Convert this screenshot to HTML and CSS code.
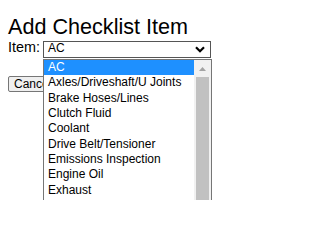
FILE: index.html
```html
<!DOCTYPE html>
<html lang="en">
<head>
<meta charset="utf-8">
<title>Add Checklist Item</title>
<link rel="stylesheet" href="styles.css">
</head>
<body>
<div class="page">
  <h1 class="title">Add Checklist Item</h1>
  <div class="field-row">
    <label class="field-label">Item:</label>
    <div class="combo">
      <div class="select">
        <span class="select-value">AC</span>
        <svg class="chevron" width="10" height="7" viewBox="0 0 10 7"><path d="M1 1.2 L5 5.2 L9 1.2" fill="none" stroke="#000" stroke-width="2.2"/></svg>
      </div>
      <div class="listbox">
        <ul class="options">
          <li class="option selected">AC</li>
          <li class="option">Axles/Driveshaft/U Joints</li>
          <li class="option">Brake Hoses/Lines</li>
          <li class="option">Clutch Fluid</li>
          <li class="option">Coolant</li>
          <li class="option">Drive Belt/Tensioner</li>
          <li class="option">Emissions Inspection</li>
          <li class="option">Engine Oil</li>
          <li class="option">Exhaust</li>
        </ul>
        <div class="scrollbar">
          <div class="scroll-btn">
            <svg width="7" height="4" viewBox="0 0 7 4"><path d="M0 4 L3.5 0 L7 4 Z" fill="#a3a3a3"/></svg>
          </div>
          <div class="thumb"></div>
        </div>
      </div>
    </div>
  </div>
  <div class="actions">
    <button class="btn" type="button">Cancel</button>
  </div>
</div>
</body>
</html>
```
FILE: styles.css
```css
html,
body {
  margin: 0;
  height: 200px;
  overflow: hidden;
}
body {
  background: #fff;
  color: #000;
  font-family: "Liberation Sans", Arial, sans-serif;
}
.page {
  box-sizing: border-box;
  height: 200px;
  padding: 14px 8px 0;
}
.title {
  margin: 0;
  font-size: 21.6px;
  line-height: 25px;
  font-weight: normal;
}
.field-row {
  display: flex;
  align-items: baseline;
  gap: 3px;
}
.field-label {
  font-size: 14.4px;
}
.combo {
  position: relative;
}
.select {
  box-sizing: border-box;
  width: 168px;
  height: 17px;
  border: 1px solid #555;
  padding: 0 5px 0 4px;
  font-size: 12px;
  line-height: 13px;
  display: flex;
  align-items: flex-start;
  justify-content: space-between;
}
.chevron {
  margin-top: 4px;
}
.listbox {
  position: absolute;
  top: 100%;
  left: 0;
  box-sizing: border-box;
  width: 169px;
  height: 141px;
  border: 1px solid #767676;
  border-bottom: 0;
  background: #fff;
  display: flex;
  overflow: hidden;
  margin-top: 1px;
}
.options {
  list-style: none;
  margin: 0;
  padding: 0;
  flex: 1;
  font-size: 12px;
}
.option {
  height: 15.35px;
  line-height: 15.35px;
  padding-left: 4px;
  white-space: nowrap;
}
.option.selected {
  background: #1e90ff;
  color: #fff;
}
.scrollbar {
  width: 17px;
  background: #f1f1f1;
  display: flex;
  flex-direction: column;
}
.scroll-btn {
  flex: none;
  height: 17px;
  display: flex;
  align-items: center;
  justify-content: center;
}
.thumb {
  flex: 1;
  margin: 0 2px;
  background: #c1c1c1;
}
.actions {
  margin-top: 16px;
}
.btn {
  font-family: "Liberation Sans", Arial, sans-serif;
  font-size: 12px;
  line-height: 14px;
  height: 16px;
  padding: 0 6px 0 5px;
  color: #000;
  background: #efefef;
  border: 1px solid #767676;
  border-radius: 2px;
}
```
